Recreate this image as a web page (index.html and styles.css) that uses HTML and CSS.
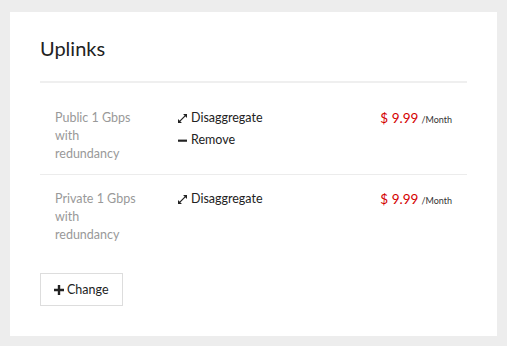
FILE: index.html
```html
<!DOCTYPE html>
<html lang="en">
<head>
    <meta charset="UTF-8">
    <title>Uplinks</title>
    <link rel="stylesheet" href="styles.css">
</head>
<body>
    <div class="panel">
        <h2>Uplinks</h2>

        <div class="uplinks">
            <div class="uplink">
                <div class="name">Public 1 Gbps with redundancy</div>
                <div class="actions">
                    <a class="action">
                        <svg class="icon" viewBox="0 0 10 10"><path d="M5.6 0 H10 V4.4 Z M0 5.6 V10 H4.4 Z" fill="#222"/><path d="M1.8 8.2 L8.2 1.8" stroke="#222" stroke-width="1.3"/></svg>
                        Disaggregate
                    </a>
                    <a class="action">
                        <svg class="icon" viewBox="0 0 10 10"><rect x="0" y="4" width="10" height="2.4" fill="#222"/></svg>
                        Remove
                    </a>
                </div>
                <div class="price"><span class="amount">$ 9.99</span> <span class="period">/Month</span></div>
            </div>
            <div class="uplink">
                <div class="name">Private 1 Gbps with redundancy</div>
                <div class="actions">
                    <a class="action">
                        <svg class="icon" viewBox="0 0 10 10"><path d="M5.6 0 H10 V4.4 Z M0 5.6 V10 H4.4 Z" fill="#222"/><path d="M1.8 8.2 L8.2 1.8" stroke="#222" stroke-width="1.3"/></svg>
                        Disaggregate
                    </a>
                </div>
                <div class="price"><span class="amount">$ 9.99</span> <span class="period">/Month</span></div>
            </div>
        </div>

        <button class="btn">
            <svg class="plus" viewBox="0 0 10 10"><path d="M3.8 0 H6.2 V3.8 H10 V6.2 H6.2 V10 H3.8 V6.2 H0 V3.8 H3.8 Z" fill="#222"/></svg>
            Change
        </button>
    </div>
</body>
</html>
```

FILE: styles.css
```css
body {
    margin: 0;
    padding: 12px 10px 11px;
    background: #ededed;
    font-family: Lato, "Noto Sans", sans-serif;
    font-size: 12px;
    color: #333;
}
.panel {
    background: white;
    padding: 22px 30px 30px;
}
h2 {
    margin: 0;
    font-size: 20px;
    font-weight: normal;
    color: #222;
    line-height: 28px;
    padding-bottom: 19px;
    border-bottom: 2px solid #efefef;
}
.uplinks { margin: 11px 0 29px; }
.uplink {
    display: flex;
    align-items: flex-start;
    padding: 15px 15px 11px;
    border-bottom: 1px solid #ececec;
    line-height: 18px;
}
.uplink:last-child { border-bottom: none; padding-bottom: 0; }
.name {
    width: 85px;
    margin-right: 38px;
    color: #999;
    font-size: 12.5px;
}
.actions {
    flex: 1;
    display: flex;
    flex-direction: column;
    gap: 4px;
}
.action {
    display: flex;
    align-items: center;
    gap: 4px;
    color: #222;
    font-size: 12.5px;
    cursor: pointer;
}
.icon { width: 9px; height: 9px; }
.price { white-space: nowrap; }
.amount { color: #d40000; font-size: 13.5px; }
.period { font-size: 9px; color: #333; }
.btn {
    display: flex;
    align-items: center;
    gap: 3px;
    height: 33px;
    padding: 0 13px;
    background: white;
    border: 1px solid #ddd;
    font-family: inherit;
    font-size: 12.5px;
    color: #222;
}
.plus { width: 10px; height: 10px; }
```
